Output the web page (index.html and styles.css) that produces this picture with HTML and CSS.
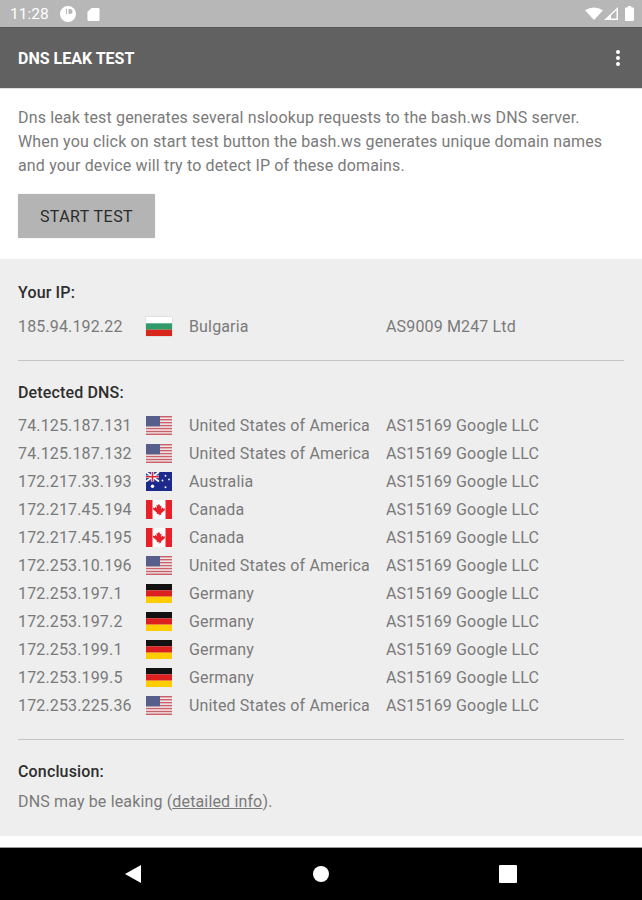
FILE: index.html
```html
<!DOCTYPE html>
<html>
<head>
    <meta charset="UTF-8">
    <title>DNS Leak Test</title>

    <link rel="stylesheet" href="styles.css">
</head>
<body>
    <svg class="defs" width="0" height="0">
        <defs>
            <symbol id="flag-bg" viewBox="0 0 26 18" preserveAspectRatio="none">
                <rect width="26" height="6" fill="#fff"/>
                <rect y="6" width="26" height="6" fill="#2f9a6b"/>
                <rect y="12" width="26" height="6" fill="#d8261c"/>
            </symbol>
            <symbol id="flag-us" viewBox="0 0 26 18" preserveAspectRatio="none">
                <rect width="26" height="18" fill="#f4f0f0"/>
                <rect y="0" width="26" height="1.4" fill="#c9606a"/>
                <rect y="2.8" width="26" height="1.4" fill="#c9606a"/>
                <rect y="5.6" width="26" height="1.4" fill="#c9606a"/>
                <rect y="8.4" width="26" height="1.4" fill="#c9606a"/>
                <rect y="11.2" width="26" height="1.4" fill="#c9606a"/>
                <rect y="14" width="26" height="1.4" fill="#c9606a"/>
                <rect y="16.6" width="26" height="1.4" fill="#c9606a"/>
                <rect width="14" height="9.800" fill="#565f8c"/>
            </symbol>
            <symbol id="flag-au" viewBox="0 0 26 18" preserveAspectRatio="none">
                <rect width="26" height="18" fill="#1c2a8c"/>
                <rect width="13" height="9" fill="#3a4596"/>
                <path d="M0 0L13 9M13 0L0 9" stroke="#fff" stroke-width="1.6"/>
                <path d="M6.500 0V9M0 4.500H13" stroke="#fff" stroke-width="2.6"/>
                <path d="M6.500 0V9M0 4.500H13" stroke="#d8263a" stroke-width="1.4"/>
                <circle cx="6.500" cy="13.500" r="1.7" fill="#fff"/>
                <circle cx="19.500" cy="3.500" r=".9" fill="#fff"/>
                <circle cx="19.500" cy="14.500" r="1" fill="#fff"/>
                <circle cx="16.500" cy="8" r=".9" fill="#fff"/>
                <circle cx="23" cy="7" r=".9" fill="#fff"/>
            </symbol>
            <symbol id="flag-ca" viewBox="0 0 26 18" preserveAspectRatio="none">
                <rect width="26" height="18" fill="#fff"/>
                <rect width="6.500" height="18" fill="#e8202a"/>
                <rect x="19.500" width="6.500" height="18" fill="#e8202a"/>
                <path d="M13 3.500l1.300 2.400 1.300-.6-.5 3.200 1.600-1.400.5 1.200 2-.3-.6 2-1 .6-2.600 2.200.3 1.300-2-.3V15h-.6v-1.900l-2 .3.3-1.300-2.600-2.200-1-.6-.6-2 2 .3.5-1.200 1.600 1.400-.5-3.200 1.300.6z" fill="#e8202a"/>
            </symbol>
            <symbol id="flag-de" viewBox="0 0 26 18" preserveAspectRatio="none">
                <rect width="26" height="6" fill="#111"/>
                <rect y="6" width="26" height="6" fill="#dc1f1f"/>
                <rect y="12" width="26" height="6" fill="#fc0"/>
            </symbol>
        </defs>
    </svg>

    <div class="status-bar">
        <div class="status-left">
            <span class="clock">11:28</span>
            <svg class="ic" width="16" height="16" viewBox="0 0 16 16">
                <path fill-rule="evenodd" d="M8 0a8 8 0 1 1 0 16A8 8 0 0 1 8 0zM6 3v5h1V3zm2.500 0v5H10a2.500 2.500 0 0 0 0-5z" fill="#fff"/>
            </svg>
            <svg class="ic" width="13" height="14" viewBox="0 0 14 16" preserveAspectRatio="none">
                <path d="M5 1h7a1.500 1.500 0 0 1 1.500 1.500v12A1.500 1.500 0 0 1 12 16H2a1.500 1.500 0 0 1-1.500-1.500V5.500z" fill="#fff"/>
            </svg>
        </div>
        <div class="status-right">
            <svg class="wifi" width="18" height="13" viewBox="0 0 18 14" preserveAspectRatio="none">
                <path d="M0 3.500Q9-2.500 18 3.500L9 14z" fill="#fff"/>
            </svg>
            <svg class="signal" width="14" height="13" viewBox="0 0 14 14" preserveAspectRatio="none">
                <path fill-rule="evenodd" d="M14 0V14H0zM12.500 3.500L7 9V12.500H12.500z" fill="#fff"/>
            </svg>
            <svg class="battery" width="9" height="15" viewBox="0 0 10 16" preserveAspectRatio="none">
                <path d="M3 0h4v1.500h2a1 1 0 0 1 1 1V15a1 1 0 0 1-1 1H1a1 1 0 0 1-1-1V2.500a1 1 0 0 1 1-1h2z" fill="#fff"/>
            </svg>
        </div>
    </div>

    <div class="toolbar">
        <span class="toolbar-title">DNS LEAK TEST</span>
        <div class="menu-dots"><i></i><i></i><i></i></div>
    </div>

    <div class="intro">
        <p>Dns leak test generates several nslookup requests to the bash.ws DNS server. When you click on start test button the bash.ws generates unique domain names and your device will try to detect IP of these domains.</p>
        <button class="btn">START TEST</button>
    </div>

    <div class="results">
        <h4>Your IP:</h4>
        <div class="row">
            <span>185.94.192.22</span>
            <svg class="flag flag-light"><use href="#flag-bg"/></svg>
            <span>Bulgaria</span>
            <span>AS9009 M247 Ltd</span>
        </div>
        <hr>

        <h4 class="dns-title">Detected DNS:</h4>
        <div class="row"><span>74.125.187.131</span><svg class="flag"><use href="#flag-us"/></svg><span>United States of America</span><span>AS15169 Google LLC</span></div>
        <div class="row"><span>74.125.187.132</span><svg class="flag"><use href="#flag-us"/></svg><span>United States of America</span><span>AS15169 Google LLC</span></div>
        <div class="row"><span>172.217.33.193</span><svg class="flag"><use href="#flag-au"/></svg><span>Australia</span><span>AS15169 Google LLC</span></div>
        <div class="row"><span>172.217.45.194</span><svg class="flag"><use href="#flag-ca"/></svg><span>Canada</span><span>AS15169 Google LLC</span></div>
        <div class="row"><span>172.217.45.195</span><svg class="flag"><use href="#flag-ca"/></svg><span>Canada</span><span>AS15169 Google LLC</span></div>
        <div class="row"><span>172.253.10.196</span><svg class="flag"><use href="#flag-us"/></svg><span>United States of America</span><span>AS15169 Google LLC</span></div>
        <div class="row"><span>172.253.197.1</span><svg class="flag"><use href="#flag-de"/></svg><span>Germany</span><span>AS15169 Google LLC</span></div>
        <div class="row"><span>172.253.197.2</span><svg class="flag"><use href="#flag-de"/></svg><span>Germany</span><span>AS15169 Google LLC</span></div>
        <div class="row"><span>172.253.199.1</span><svg class="flag"><use href="#flag-de"/></svg><span>Germany</span><span>AS15169 Google LLC</span></div>
        <div class="row"><span>172.253.199.5</span><svg class="flag"><use href="#flag-de"/></svg><span>Germany</span><span>AS15169 Google LLC</span></div>
        <div class="row"><span>172.253.225.36</span><svg class="flag"><use href="#flag-us"/></svg><span>United States of America</span><span>AS15169 Google LLC</span></div>
        <hr>

        <h4 class="conclusion-title">Conclusion:</h4>
        <p class="conclusion">DNS may be leaking (<a href="#">detailed info</a>).</p>
    </div>

    <div class="spacer"></div>

    <div class="nav-bar">
        <svg width="18" height="18" viewBox="0 0 18 18"><path d="M17 0V18L1 9z" fill="#fff"/></svg>
        <svg width="18" height="18" viewBox="0 0 18 18"><circle cx="9" cy="9" r="8" fill="#fff"/></svg>
        <svg class="nav-square" width="18" height="18" viewBox="0 0 18 18"><rect width="18" height="18" rx="1" fill="#fff"/></svg>
    </div>
</body>
</html>
```

FILE: styles.css
```css
html, body {
    margin: 0;
    height: 900px;
}

body {
    display: flex;
    flex-direction: column;
    overflow: hidden;

    background-color: #fff;
    color: #7a7a7a;
    font-family: Roboto, "Liberation Sans", sans-serif;
    font-size: 16px;
    letter-spacing: 0.15px;
}

.defs {
    position: absolute;
}

.status-bar {
    height: 27px;
    padding: 0 8px 0 10px;
    box-sizing: border-box;

    display: flex;
    align-items: center;
    justify-content: space-between;

    background-color: #b7b7b7;
}

.status-left, .status-right {
    display: flex;
    align-items: center;
}

.status-left {
    gap: 11px;
}

.signal {
    margin-left: 1px;
}

.battery {
    margin-left: 7px;
}

.clock {
    color: #fff;
    font-size: 15.500px;
    letter-spacing: 0;
}

.ic {
    display: block;
}

.toolbar {
    height: 61px;
    padding: 0 22px 0 18px;
    box-sizing: border-box;

    display: flex;
    align-items: center;
    justify-content: space-between;

    background-color: #616161;
    border-top: 1px solid #585858;
}

.toolbar-title {
    color: #fff;
    font-size: 16px;
    font-weight: 700;
    letter-spacing: 0;
}

.menu-dots {
    display: flex;
    flex-direction: column;
    gap: 2px;
}

.menu-dots i {
    width: 4px;
    height: 4px;
    border-radius: 50%;
    background-color: #fff;
}

.intro {
    height: 171px;
    padding: 17px 24px 0 18px;
    box-sizing: border-box;
    border-top: 1px solid #ddd;
}

.intro p {
    margin: 0 0 16px;
    line-height: 24px;
}

.btn {
    display: block;
    width: 137px;
    height: 44px;
    padding: 0;

    border: none;
    border-radius: 1px;
    background-color: #b4b4b4;
    box-shadow: 0 0 1px rgba(0,0,0,0.3);

    color: #2b2b2b;
    font-family: inherit;
    font-size: 16px;
    font-weight: 400;
    letter-spacing: 0.45px;
}

.results {
    height: 577px;
    padding: 22px 18px 0;
    box-sizing: border-box;

    background-color: #eee;
}

.results h4 {
    margin: 0 0 7px;
    height: 24px;
    line-height: 24px;

    color: #2e2e2e;
    font-size: 16px;
    font-weight: 500;
}

.results .dns-title {
    margin-bottom: 6px;
}

.row {
    height: 28px;

    display: grid;
    grid-template-columns: 128px 43px 197px 1fr;
    align-items: center;
}

.flag {
    display: block;
    width: 26px;
    height: 19px;
}

.flag-light {
    box-shadow: 0 0 1px rgba(0,0,0,0.3);
}

.results hr {
    margin: 20px 0 20px;
    height: 1px;
    border: none;
    background-color: #c4c4c4;
}

.results .conclusion-title {
    margin-bottom: 6px;
}

.conclusion {
    margin: 0;
    line-height: 24px;
}

.conclusion a {
    color: inherit;
}

.spacer {
    height: 12px;
    border-bottom: 1px solid #999;
    box-sizing: border-box;
}

.nav-bar {
    flex: 1;
    padding: 0 0 0 124px;

    display: flex;
    align-items: center;
    gap: 170px;

    background-color: #000;
}

.nav-square {
    margin-left: -1px;
}
```
